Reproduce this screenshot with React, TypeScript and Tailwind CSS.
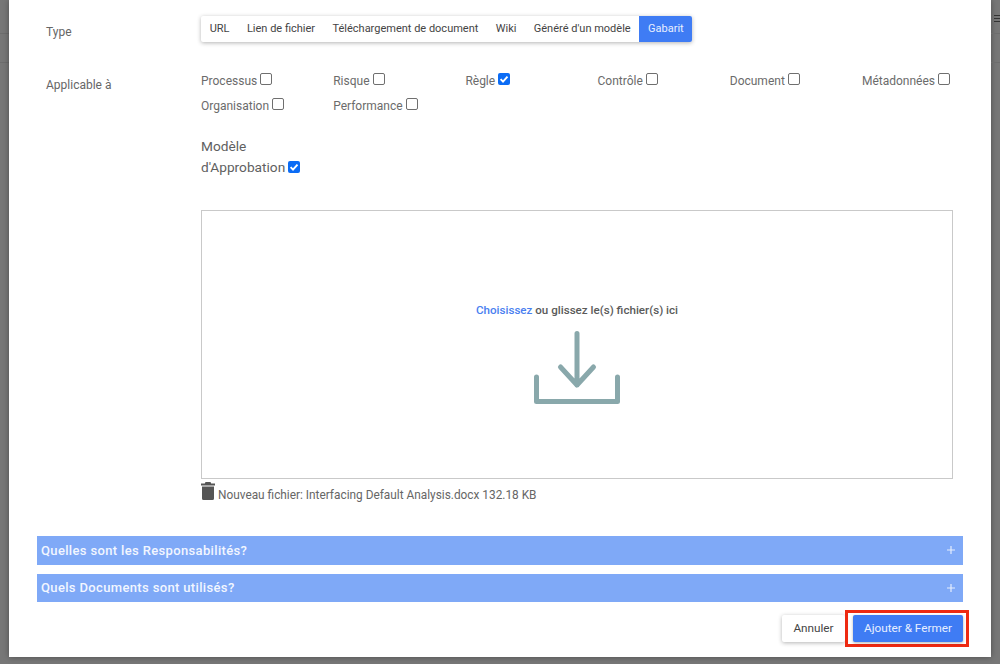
import React from "react";

const tabs = ["URL", "Lien de fichier", "Téléchargement de document", "Wiki", "Généré d'un modèle"];

function Box({ checked = false }: { checked?: boolean }) {
  return checked ? (
    <span className="inline-flex h-[12px] w-[12px] rounded-[2px] bg-[#0b6cf5] items-center justify-center shrink-0">
      <svg viewBox="0 0 12 12" className="h-[12px] w-[12px]">
        <path d="M2.6 6.2 5 8.6 9.5 3.6" fill="none" stroke="#fff" strokeWidth="1.9" />
      </svg>
    </span>
  ) : (
    <span className="inline-block h-[12px] w-[12px] rounded-[2px] border border-[#6f6f6f] bg-white shrink-0" />
  );
}

function Check({ label, checked }: { label: string; checked?: boolean }) {
  return (
    <div className="flex h-[25px] items-center text-[12px] text-[#6b6b6b]">
      <span>{label}</span>
      <span className="ml-[3px] -mt-[3px] flex"><Box checked={checked} /></span>
    </div>
  );
}

function Accordion({ title }: { title: string }) {
  return (
    <div className="flex h-[28.5px] items-center justify-between bg-[#7fa9f7] pl-[4px] pr-[8px] text-white">
      <span className="text-[13px] font-medium tracking-[0.35px] text-[#f2f6ff]">{title}</span>
      <svg viewBox="0 0 8 8" className="h-[8px] w-[8px] opacity-80">
        <path d="M4 0v8M0 4h8" stroke="#fff" strokeWidth="1.2" />
      </svg>
    </div>
  );
}

export default function App() {
  return (
    <div className="h-[664px] w-[1000px] overflow-hidden bg-[#777777] font-['Roboto',sans-serif]">
      <div className="flex">
        <div className="w-[9px] shrink-0">
          <div className="mt-[33px] h-px bg-[#6d6d6d]" />
          <div className="mt-[28px] h-px bg-[#6d6d6d]" />
        </div>
        <div className="flex h-[657px] w-[982px] shrink-0 flex-col bg-white pl-[28px] pr-[28px] shadow-[0_0_6px_rgba(0,0,0,0.35)]">
          <div className="flex pt-[16px]">
            <div className="w-[164px] shrink-0 pl-[9px] pt-[7px] text-[12px] text-[#666666]">Type</div>
            <div className="flex h-[26px] rounded-[2px] bg-white text-[11px] text-[#444444] shadow-[0_1px_4px_rgba(0,0,0,0.3)]">
              {tabs.map((t) => (
                <span key={t} className="flex items-center px-[8.7px] pt-[1px]">{t}</span>
              ))}
              <span className="flex items-center rounded-r-[2px] bg-[#3f7cf4] px-[8.7px] pt-[1px] text-[#e8efff]">Gabarit</span>
            </div>
          </div>

          <div className="mt-[26px] flex">
            <div className="w-[164px] shrink-0 pl-[9px] pt-[8px] text-[12px] text-[#666666]">Applicable à</div>
            <div className="w-[752px]">
              <div className="grid grid-cols-[132.2px_132.2px_132.2px_132.2px_132.2px_120px]">
                <Check label="Processus" />
                <Check label="Risque" />
                <Check label="Règle" checked />
                <Check label="Contrôle" />
                <Check label="Document" />
                <Check label="Métadonnées" />
                <Check label="Organisation" />
                <Check label="Performance" />
              </div>
              <div className="mt-[18px] text-[13.7px] leading-[21px] text-[#5f5f5f]">
                <div>Modèle</div>
                <div className="flex items-center">
                  d'Approbation
                  <span className="ml-[3px] -mt-[2px] flex"><Box checked /></span>
                </div>
              </div>
              <div className="mt-[32px] flex h-[269px] flex-col items-center border border-[#c9c9c9] bg-white pt-[92px]">
                <div className="text-[11.6px] font-medium leading-[14px] text-[#5a5a5a]">
                  <span className="text-[#4a80f0]">Choisissez</span> ou glissez le(s) fichier(s) ici
                </div>
                <svg viewBox="0 0 88 76" className="mt-[12px] h-[76px] w-[88px]" fill="none" stroke="#89a8ab" strokeWidth="5" strokeLinecap="round" strokeLinejoin="round">
                  <path d="M44 4.5V56M27.5 38 44 56 60.5 38" />
                  <path d="M3.5 48v24.5h81V48" />
                </svg>
              </div>
              <div className="flex h-[25px] items-start text-[11.85px] leading-[16px] text-[#666666]">
                <svg viewBox="0 0 14 18" className="mt-[3px] mr-[3px] h-[18px] w-[14px]" fill="#555555">
                  <path d="M4.5 0h5l.7 1.5H14V3.4H0V1.5h3.8zM1 4.4h12V16.5a1.5 1.5 0 0 1-1.5 1.5h-9A1.5 1.5 0 0 1 1 16.5z" />
                </svg>
                <span className="mt-[8px]">Nouveau fichier: Interfacing Default Analysis.docx 132.18 KB</span>
              </div>
            </div>
          </div>

          <div className="mt-[32px] flex flex-col gap-[9px]">
            <Accordion title="Quelles sont les Responsabilités?" />
            <Accordion title="Quels Documents sont utilisés?" />
          </div>

          <div className="mt-[8px] flex items-center justify-end">
            <button className="h-[27.5px] w-[63px] rounded-[2px] bg-white text-[11.75px] text-[#444444] shadow-[0_1px_4px_rgba(0,0,0,0.3)]">Annuler</button>
            <div className="-mr-[6px] flex h-[37px] w-[124px] items-center justify-start border-[3px] border-[#ee2a12] pl-[5px]">
              <button className="h-[27.5px] w-[110px] rounded-[2px] bg-[#3f7cf4] text-[11.75px] text-[#e8efff] shadow-[0_1px_3px_rgba(0,0,0,0.3)]">Ajouter &amp; Fermer</button>
            </div>
          </div>
        </div>
        <div className="w-[9px] shrink-0 text-[#333333]">
          <div className="mt-[15px] ml-[3px] h-[7px] w-[6px] border-y border-[#333333] flex items-center"><div className="h-px w-full bg-[#333333]" /></div>
          <div className="mt-[11px] h-px bg-[#6d6d6d]" />
          <div className="mt-[28px] h-px bg-[#6d6d6d]" />
        </div>
      </div>
    </div>
  );
}
